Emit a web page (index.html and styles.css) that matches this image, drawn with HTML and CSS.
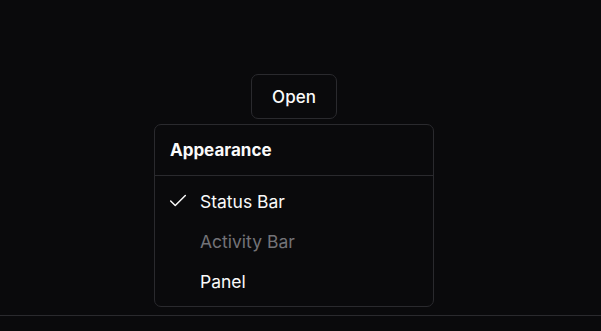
FILE: index.html
```html
<!DOCTYPE html>
<html>
<head>
<meta charset="utf-8">
<link rel="stylesheet" href="styles.css">
</head>
<body>
<main class="page">
  <button class="trigger">Open</button>
  <div class="menu">
    <div class="menu-label">Appearance</div>
    <div class="menu-items">
      <div class="item">
        <span class="indicator">
          <svg width="22" height="22" viewBox="0 0 24 24" fill="none" stroke="currentColor" stroke-width="1.6" stroke-linecap="round" stroke-linejoin="round"><path d="M20 6 9 17l-5-5"/></svg>
        </span>
        <span class="item-text">Status Bar</span>
      </div>
      <div class="item disabled">
        <span class="indicator"></span>
        <span class="item-text">Activity Bar</span>
      </div>
      <div class="item">
        <span class="indicator"></span>
        <span class="item-text">Panel</span>
      </div>
    </div>
  </div>
</main>
</body>
</html>
```
FILE: styles.css
```css
* { box-sizing: border-box; }
html, body { margin: 0; background: #0a0a0c; }
body { font-family: Inter, "Liberation Sans", sans-serif; color: #fafafa; }
.page {
  height: 316px;
  border-bottom: 1px solid #2a2a2e;
  padding: 74px 13px 0 0;
  display: flex;
  flex-direction: column;
  align-items: center;
}
.trigger {
  width: 86px;
  height: 45px;
  border: 1px solid #2a2a2e;
  border-radius: 7px;
  background: #0a0a0c;
  color: #fafafa;
  font-family: Inter, "Liberation Sans", sans-serif;
  font-size: 17px;
  font-weight: 500;
  padding: 0;
}
.menu {
  margin-top: 5px;
  width: 280px;
  height: 183px;
  border: 1px solid #2a2a2e;
  border-radius: 7px;
  background: #0a0a0c;
}
.menu-label {
  height: 51px;
  border-bottom: 1px solid #2a2a2e;
  padding-left: 15px;
  display: flex;
  align-items: center;
  font-size: 17px;
  font-weight: 700;
}
.menu-items { padding: 5px 0; }
.item {
  height: 40px;
  display: flex;
  align-items: center;
  font-size: 17.5px;
}
.indicator {
  width: 45px;
  padding-left: 12px;
  display: flex;
  align-items: center;
}
.indicator svg { display: block; }
.disabled { color: #737378; }
```
